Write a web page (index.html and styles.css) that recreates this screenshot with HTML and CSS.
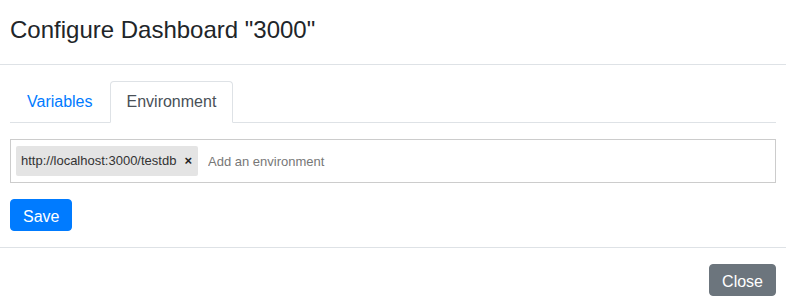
FILE: index.html
```html
<!DOCTYPE html>
<html lang="en">
<head>
    <meta charset="UTF-8">
    <meta name="viewport" content="width=device-width, initial-scale=1.0">
    <title>Configure Dashboard</title>
    <link rel="stylesheet" href="styles.css">
</head>
<body>
    <div class="modal-content">
        <div class="modal-header">
            <h4 class="modal-title">Configure Dashboard "3000"</h4>
        </div>

        <div class="modal-body">
            <ul class="nav-tabs">
                <li><a class="nav-link" href="#">Variables</a></li>
                <li><a class="nav-link active" href="#">Environment</a></li>
            </ul>

            <div class="tags-input">
                <span class="tag">http://localhost:3000/testdb <span class="tag-remove">×</span></span>
                <input class="tag-field" type="text" placeholder="Add an environment">
            </div>

            <button class="btn btn-primary">Save</button>
        </div>

        <div class="modal-footer">
            <button class="btn btn-secondary">Close</button>
        </div>
    </div>
</body>
</html>
```

FILE: styles.css
```css
body {
    font-family: "Liberation Sans", Arial, sans-serif;
    font-size: 16px;
    line-height: 1.5;
    color: #212529;
    background: white;
    margin: 0;
}

.modal-content {
    background: white;
}

.modal-header {
    padding: 14px 10px 18px;
    border-bottom: 1px solid #dee2e6;
}

.modal-title {
    margin: 0;
    font-size: 24px;
    font-weight: normal;
    line-height: 32px;
}

.modal-body {
    padding: 16px 10px;
}

.nav-tabs {
    display: flex;
    list-style: none;
    margin: 0 0 16px;
    padding: 0;
    border-bottom: 1px solid #dee2e6;
}

.nav-tabs li {
    margin-bottom: -1px;
}

.nav-link {
    display: block;
    padding: 8px 16px;
    border: 1px solid transparent;
    border-radius: 4px 4px 0 0;
    color: #007bff;
    text-decoration: none;
}

.nav-link.active {
    color: #495057;
    background: white;
    border-color: #dee2e6 #dee2e6 white;
}

.tags-input {
    display: flex;
    align-items: center;
    height: 30px;
    padding: 6px 5px;
    border: 1px solid #ccc;
    margin-bottom: 16px;
}

.tag {
    display: flex;
    align-items: center;
    height: 30px;
    padding: 0 6px 0 5px;
    background: #e4e4e4;
    border-radius: 2px;
    color: #333;
    font-size: 13px;
}

.tag-remove {
    margin-left: 8px;
    font-weight: bold;
    font-size: 13px;
    color: #222;
}

.tag-field {
    flex: 1;
    border: none;
    outline: none;
    margin-left: 10px;
    padding: 0;
    font-family: inherit;
    font-size: 13px;
    color: #333;
}

.tag-field::placeholder {
    color: #777;
}

.btn {
    display: inline-block;
    font-family: inherit;
    font-size: 16px;
    line-height: 24px;
    padding: 5px 12px 1px;
    border: 1px solid transparent;
    border-radius: 4px;
    color: white;
    cursor: pointer;
}

.btn-primary {
    background: #007bff;
    border-color: #007bff;
}

.btn-secondary {
    background: #6c757d;
    border-color: #6c757d;
}

.modal-footer {
    display: flex;
    justify-content: flex-end;
    padding: 16px 10px;
    border-top: 1px solid #dee2e6;
}
```
